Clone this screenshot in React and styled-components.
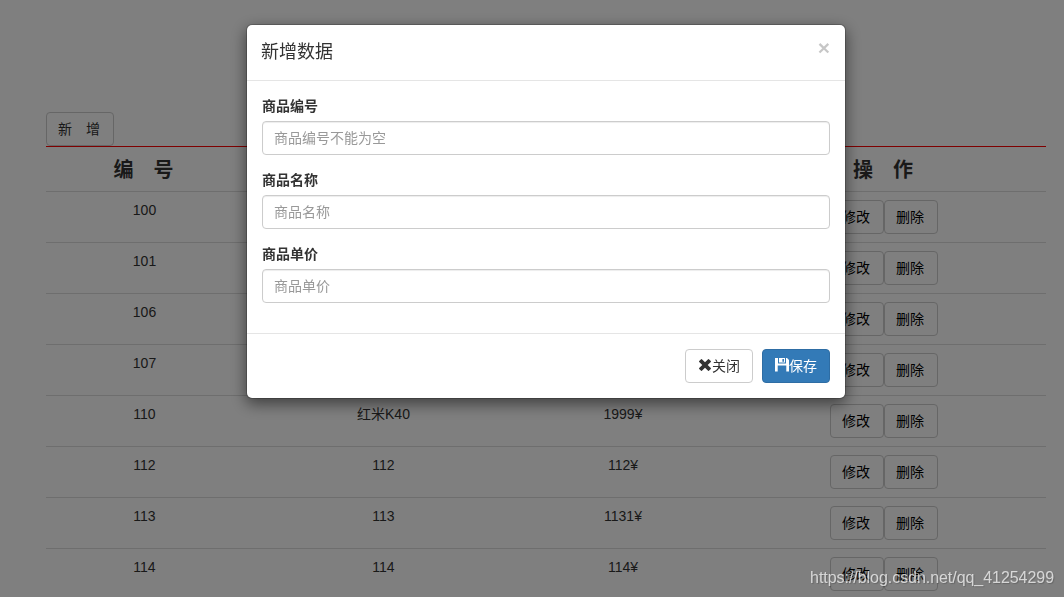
import React, { useState } from 'react';
import styled, { createGlobalStyle, css } from 'styled-components';

const products = [
    { id: '100', name: '小米10', price: '3999' },
    { id: '101', name: '小米11', price: '4299' },
    { id: '106', name: '106', price: '106' },
    { id: '107', name: '107', price: '107' },
    { id: '110', name: '红米K40', price: '1999' },
    { id: '112', name: '112', price: '112' },
    { id: '113', name: '113', price: '1131' },
    { id: '114', name: '114', price: '114' },
];

const fields = [
    { name: 'id', label: '商品编号', placeholder: '商品编号不能为空' },
    { name: 'name', label: '商品名称', placeholder: '商品名称' },
    { name: 'price', label: '商品单价', placeholder: '商品单价' },
];

const RemoveIcon = () => (
    <Glyph viewBox="0 0 14 14">
        <path d="M3.9 1.2 L7 4.3 L10.1 1.2 Q10.5 .8 10.9 1.2 L12.8 3.1 Q13.2 3.5 12.8 3.9 L9.7 7 L12.8 10.1 Q13.2 10.5 12.8 10.9 L10.9 12.8 Q10.5 13.2 10.1 12.8 L7 9.7 L3.9 12.8 Q3.5 13.2 3.1 12.8 L1.2 10.9 Q.8 10.5 1.2 10.1 L4.3 7 L1.2 3.9 Q.8 3.5 1.2 3.1 L3.1 1.2 Q3.5 .8 3.9 1.2 Z" />
    </Glyph>
);

const SaveIcon = () => (
    <Glyph viewBox="0 0 14 14">
        <path d="M0 0 H3 V5.5 H11 V0 H12 L14 2 V13.5 H11.3 V7.5 H2.7 V13.5 H0 Z M4 0 H10 V4.6 H4 Z M7.4 .9 V3.7 H9 V.9 Z" fillRule="evenodd" />
    </Glyph>
);

const App = () => {
    const [showModal, setShowModal] = useState(true);
    const closeModal = () => setShowModal(false);

    return (
        <>
            <GlobalStyle />
            <Page>
                <Toolbar>
                    <Button onClick={() => setShowModal(true)}>新　增</Button>
                </Toolbar>
                <Table>
                    <HeaderRow>
                        <HeaderCell>编　号</HeaderCell>
                        <HeaderCell>名　称</HeaderCell>
                        <HeaderCell>单　价</HeaderCell>
                        <HeaderCell>操　作</HeaderCell>
                    </HeaderRow>
                    {products.map((product) => (
                        <Row key={product.id}>
                            <Cell>{product.id}</Cell>
                            <Cell>{product.name}</Cell>
                            <Cell>{product.price}¥</Cell>
                            <Cell>
                                <RowButton>修改</RowButton>
                                <RowButton>删除</RowButton>
                            </Cell>
                        </Row>
                    ))}
                </Table>
            </Page>
            {showModal &&
                <Backdrop>
                    <Modal role="dialog" aria-label="新增数据">
                        <ModalHeader>
                            <ModalTitle>新增数据</ModalTitle>
                            <CloseButton onClick={closeModal}>×</CloseButton>
                        </ModalHeader>
                        <ModalBody>
                            {fields.map((field) => (
                                <FormGroup key={field.name}>
                                    <Label htmlFor={field.name}>{field.label}</Label>
                                    <Input id={field.name} placeholder={field.placeholder} />
                                </FormGroup>
                            ))}
                        </ModalBody>
                        <ModalFooter>
                            <Button onClick={closeModal}><RemoveIcon />关闭</Button>
                            <Button $primary><SaveIcon />保存</Button>
                        </ModalFooter>
                    </Modal>
                </Backdrop>
            }
            <Watermark>https://blog.csdn.net/qq_41254299</Watermark>
        </>
    );
};

const GlobalStyle = createGlobalStyle`
    * {
        box-sizing: border-box;
    }
    body {
        margin: 0;
        overflow: hidden;
        font: 14px/20px "Liberation Sans", "Noto Sans CJK SC", sans-serif;
        color: #333;
        background: #fff;
    }
    button, input {
        font: inherit;
    }
`;

const Page = styled.div`
    height: 597px;
    overflow: hidden;
    padding: 112px 18px 0 46px;
`;

const Toolbar = styled.div`
    display: flex;
    height: 34px;
`;

const Button = styled.button`
    display: inline-flex;
    align-items: center;
    height: 34px;
    padding: 0 13px 0 11px;
    width: 68px;
    border: 1px solid #ccc;
    border-radius: 4px;
    color: #333;
    background: #fff;
    white-space: nowrap;
    ${({ $primary }) => $primary && css`
        color: #fff;
        background: #337ab7;
        border-color: #2e6da4;
    `}
`;

const RowButton = styled(Button)`
    width: 54px;
    color: #000;
`;

const Glyph = styled.svg`
    flex: none;
    width: 14px;
    height: 14px;
    margin-top: -2px;
    fill: currentColor;
`;

const Table = styled.div`
    border-top: 1px solid #f00;
`;

const Row = styled.div`
    display: grid;
    grid-template-columns: 197px 281px 198px 324px;
    height: 51px;
    border-top: 1px solid #ddd;
`;

const HeaderRow = styled(Row)`
    height: 44px;
    border-top: 0;
`;

const Cell = styled.div`
    display: flex;
    justify-content: center;
    align-items: flex-start;
    padding-top: 8px;
`;

const HeaderCell = styled(Cell)`
    padding: 9px 2px 0 0;
    font-size: 20px;
    line-height: 28px;
    font-weight: bold;
`;

const Backdrop = styled.div`
    position: fixed;
    inset: 0;
    display: flex;
    justify-content: center;
    align-items: flex-start;
    padding: 24px 0 0 28px;
    background: rgba(0, 0, 0, 0.5);
`;

const Modal = styled.div`
    width: 600px;
    background: #fff;
    background-clip: padding-box;
    border: 1px solid rgba(0, 0, 0, 0.2);
    border-radius: 6px;
    box-shadow: 0 5px 15px rgba(0, 0, 0, 0.5);
`;

const ModalHeader = styled.div`
    display: flex;
    justify-content: space-between;
    align-items: flex-start;
    height: 56px;
    padding: 13px 15px 0 14px;
    border-bottom: 1px solid #e5e5e5;
`;

const ModalTitle = styled.h4`
    margin: 2px 0 0;
    font-size: 18px;
    line-height: 25px;
    font-weight: 400;
`;

const CloseButton = styled.button`
    padding: 0;
    border: 0;
    background: none;
    font-size: 21px;
    line-height: 20px;
    font-weight: bold;
    color: #000;
    opacity: 0.22;
`;

const ModalBody = styled.div`
    padding: 15px;
`;

const FormGroup = styled.div`
    margin-bottom: 15px;
`;

const Label = styled.label`
    display: block;
    margin-bottom: 5px;
    font-weight: bold;
`;

const Input = styled.input`
    display: block;
    width: 100%;
    height: 34px;
    padding: 6px 12px 6px 11px;
    border: 1px solid #ccc;
    border-radius: 4px;
    color: #555;
    box-shadow: inset 0 1px 1px rgba(0, 0, 0, 0.075);
    &::placeholder {
        color: #999;
    }
`;

const ModalFooter = styled.div`
    display: flex;
    justify-content: flex-end;
    gap: 9px;
    padding: 15px;
    border-top: 1px solid #e5e5e5;

    ${Button} {
        padding: 0 12px;
    }
`;

const Watermark = styled.div`
    position: fixed;
    right: 10px;
    bottom: 9px;
    font-size: 16px;
    letter-spacing: -0.05px;
    color: rgba(255, 255, 255, 0.7);
    text-shadow: 1px 1px 1px rgba(0, 0, 0, 0.2);
`;

export default App;
